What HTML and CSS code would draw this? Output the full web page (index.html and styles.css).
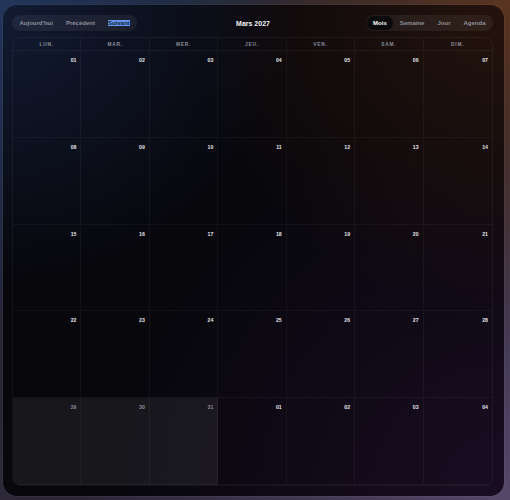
FILE: index.html
```html
<!DOCTYPE html>
<html lang="fr">
<head>
    <meta charset="UTF-8">
    <meta name="viewport" content="width=device-width, initial-scale=1.0">
    <title>Calendrier</title>
    <link rel="stylesheet" href="styles.css">
</head>
<body>
    <div class="calendar">
        <div class="toolbar">
            <div class="btn-group">
                <button class="btn">Aujourd'hui</button>
                <button class="btn">Précédent</button>
                <button class="btn"><span class="selected-text">Suivant</span></button>
            </div>
            <div class="title">Mars 2027</div>
            <div class="btn-group right">
                <button class="btn active">Mois</button>
                <button class="btn">Semaine</button>
                <button class="btn">Jour</button>
                <button class="btn">Agenda</button>
            </div>
        </div>

        <div class="month">
            <div class="dow">Lun.</div>
            <div class="dow">Mar.</div>
            <div class="dow">Mer.</div>
            <div class="dow">Jeu.</div>
            <div class="dow">Ven.</div>
            <div class="dow">Sam.</div>
            <div class="dow">Dim.</div>
        </div>
    </div>

    <script>
        // Build the month grid: 5 weeks starting Monday 1 March 2027
        const month = document.querySelector('.month');
        const days = [];
        for (let d = 1; d <= 31; d++) days.push({ n: d, past: d >= 29 });
        for (let d = 1; d <= 4; d++) days.push({ n: d, next: true });

        days.forEach((day, i) => {
            const cell = document.createElement('div');
            cell.className = 'day';
            if (day.past) cell.classList.add('faded');
            if (i % 7 === 6) cell.classList.add('last-col');
            const num = document.createElement('span');
            num.className = 'num';
            num.innerText = String(day.n).padStart(2, '0');
            cell.appendChild(num);
            month.appendChild(cell);
        });
    </script>
</body>
</html>
```

FILE: styles.css
```css
html, body {
    height: 100%;
}

body {
    margin: 0;
    font-family: 'Liberation Sans', Arial, sans-serif;
    background:
        radial-gradient(circle at 0% 0%, #22365a 0%, rgba(34, 54, 90, 0) 45%),
        radial-gradient(circle at 100% 0%, #5a3420 0%, rgba(90, 52, 32, 0) 50%),
        radial-gradient(circle at 100% 100%, #55486a 0%, rgba(85, 72, 106, 0) 60%),
        linear-gradient(180deg, #1c2232 0%, #2c2838 100%);
    padding: 5px 6px 4px 3px;
    box-sizing: border-box;
}

.calendar {
    height: 100%;
    box-sizing: border-box;
    border-radius: 14px;
    padding: 10px 10px 10px 9px;
    display: flex;
    flex-direction: column;
    gap: 6px;
    background:
        radial-gradient(ellipse at 0% 0%, rgba(22, 34, 64, 0.75) 0%, rgba(22, 34, 64, 0) 40%),
        radial-gradient(ellipse at 100% 0%, rgba(44, 22, 12, 0.8) 0%, rgba(44, 22, 12, 0) 45%),
        radial-gradient(ellipse at 100% 100%, rgba(30, 14, 40, 0.8) 0%, rgba(30, 14, 40, 0) 55%),
        #07070c;
    box-shadow: 0 0 0 1px rgba(255, 255, 255, 0.04);
}

.toolbar {
    display: grid;
    grid-template-columns: 1fr auto 1fr;
    align-items: center;
    height: 16px;
}

.btn-group {
    display: flex;
    align-items: center;
    justify-self: start;
    height: 16px;
    padding: 0 1px;
    border-radius: 8px;
    background-color: rgba(255, 255, 255, 0.06);
}

.btn-group.right {
    justify-self: end;
    margin-right: 1px;
}

.btn {
    font-family: inherit;
    font-size: 6px;
    font-weight: bold;
    color: #8d8f99;
    background: none;
    border: none;
    padding: 0 6.5px;
    height: 14px;
    border-radius: 7px;
    cursor: pointer;
}

.btn.active {
    background-color: #09090c;
    color: #ffffff;
}

.selected-text {
    background-color: #6596ea;
    color: #0c1a35;
}

.title {
    font-size: 7px;
    font-weight: bold;
    color: #f2f2f5;
}

.month {
    flex: 1;
    display: grid;
    grid-template-columns: repeat(7, 1fr);
    grid-template-rows: 13px repeat(5, 1fr);
    border: 1px solid rgba(255, 255, 255, 0.05);
    border-radius: 8px;
    overflow: hidden;
    margin-right: 1px;
}

.dow {
    font-size: 4.8px;
    font-weight: bold;
    letter-spacing: 0.8px;
    text-transform: uppercase;
    color: #8a8e98;
    text-align: center;
    line-height: 13px;
    border-right: 1px solid rgba(255, 255, 255, 0.045);
    border-bottom: 1px solid rgba(255, 255, 255, 0.05);
}

.dow:nth-child(7) {
    border-right: none;
}

.day {
    border-right: 1px solid rgba(255, 255, 255, 0.045);
    border-bottom: 1px solid rgba(255, 255, 255, 0.045);
    text-align: right;
    padding: 3px 4px 0 0;
    line-height: 6px;
}

.day.last-col {
    border-right: none;
}

.day.faded {
    background-color: rgba(255, 255, 255, 0.065);
}

.num {
    font-size: 5.2px;
    font-weight: bold;
    color: #e4e5ea;
}

.day.faded .num {
    color: #8e8e98;
}
```
